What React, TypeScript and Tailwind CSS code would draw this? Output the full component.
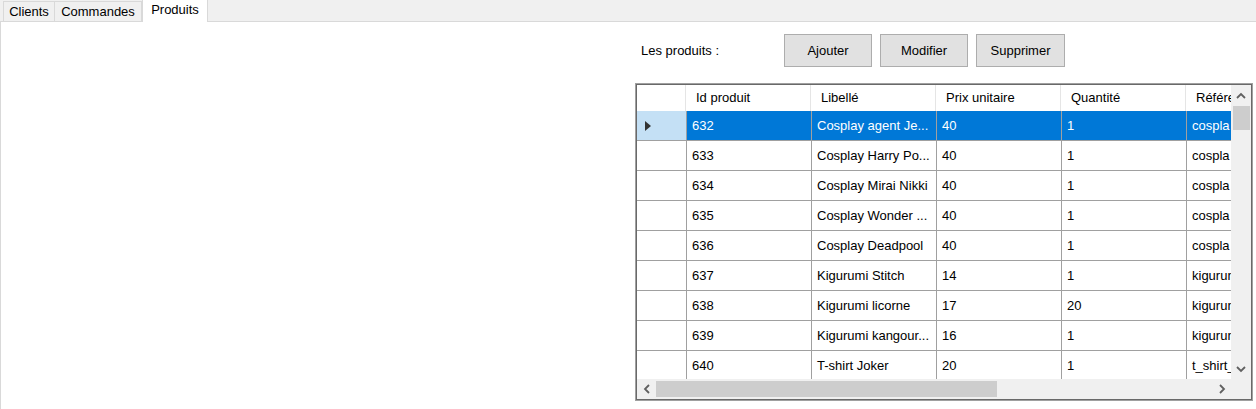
import React from "react";

type Product = {
  id: number;
  label: string;
  price: number;
  qty: number;
  ref: string;
};

const products: Product[] = [
  { id: 632, label: "Cosplay agent Je...", price: 40, qty: 1, ref: "cospla" },
  { id: 633, label: "Cosplay Harry Po...", price: 40, qty: 1, ref: "cospla" },
  { id: 634, label: "Cosplay Mirai Nikki", price: 40, qty: 1, ref: "cospla" },
  { id: 635, label: "Cosplay Wonder ...", price: 40, qty: 1, ref: "cospla" },
  { id: 636, label: "Cosplay Deadpool", price: 40, qty: 1, ref: "cospla" },
  { id: 637, label: "Kigurumi Stitch", price: 14, qty: 1, ref: "kigurun" },
  { id: 638, label: "Kigurumi licorne", price: 17, qty: 20, ref: "kigurun" },
  { id: 639, label: "Kigurumi kangour...", price: 16, qty: 1, ref: "kigurun" },
  { id: 640, label: "T-shirt Joker", price: 20, qty: 1, ref: "t_shirt_" },
];

const font = "font-['Liberation_Sans',Arial,sans-serif] text-[13px]";

function Chevron({ dir }: { dir: "up" | "down" | "left" | "right" }) {
  const d = {
    up: "M1 6 L5 2 L9 6",
    down: "M1 2 L5 6 L9 2",
    left: "M6 1 L2 5 L6 9",
    right: "M2 1 L6 5 L2 9",
  }[dir];
  const vert = dir === "up" || dir === "down";
  return (
    <svg width={vert ? 10 : 8} height={vert ? 8 : 10} viewBox={vert ? "0 0 10 8" : "0 0 8 10"}>
      <path d={d} fill="none" stroke="#606060" strokeWidth="1.8" />
    </svg>
  );
}

export default function App() {
  return (
    <div className={`w-[1256px] h-[409px] bg-white text-black ${font} flex flex-col overflow-hidden`}>
      {/* Tab strip */}
      <div className="h-[22px] bg-[#f0f0f0] flex items-end pl-[3px] border-b border-[#d9d9d9] shrink-0">
        <div className="w-[52px] h-[20px] border border-b-0 border-[#d9d9d9] flex items-center justify-center leading-none">
          Clients
        </div>
        <div className="w-[87px] h-[20px] border border-b-0 border-l-0 border-[#d9d9d9] flex items-center justify-center leading-none">
          Commandes
        </div>
        <div className="w-[66px] h-[23px] -mb-px bg-white border border-b-0 border-[#d9d9d9] flex items-start pt-[3px] justify-center leading-none">
          Produits
        </div>
      </div>

      {/* Tab page */}
      <div className="flex-1 border-l border-[#d9d9d9]">
        <div className="ml-[634px] w-[618px]">
          {/* Toolbar */}
          <div className="flex items-center pt-[12px]">
            <div className="w-[149px] pl-[6px]">Les produits :</div>
            <div className="flex gap-[8px]">
              {["Ajouter", "Modifier", "Supprimer"].map((b) => (
                <div
                  key={b}
                  className="w-[88px] last:w-[89px] h-[33px] bg-[#e1e1e1] border border-[#adadad] flex items-center justify-center"
                >
                  {b}
                </div>
              ))}
            </div>
          </div>

          {/* DataGridView */}
          <div className="mt-[16px] h-[318px] border border-[#a0a0a0]">
            <div className="h-full border border-[#696969] flex flex-col bg-[#f0f0f0]">
              <div className="flex h-[294px]">
                <div className="flex-1 overflow-hidden bg-white">
                  {/* Header */}
                  <div className="flex h-[26px] w-[700px]">
                    <div className="w-[49px] border-r border-[#e5e5e5]" />
                    {["Id produit", "Libellé", "Prix unitaire", "Quantité", "Référence"].map((h) => (
                      <div
                        key={h}
                        className="w-[125px] shrink-0 border-r border-[#e5e5e5] pl-[10px] flex items-center whitespace-nowrap"
                      >
                        {h}
                      </div>
                    ))}
                  </div>
                  {/* Rows */}
                  {products.map((p, i) => {
                    const sel = i === 0;
                    const cell = `w-[125px] shrink-0 border-r border-b border-[#a0a0a0] pl-[5px] flex items-center whitespace-nowrap overflow-hidden ${
                      sel ? "bg-[#0078d7] text-white" : ""
                    }`;
                    return (
                      <div key={p.id} className="flex h-[30px] w-[700px]">
                        <div
                          className={`w-[50px] shrink-0 border-r border-b border-[#a0a0a0] flex items-center pl-[8px] ${
                            sel ? "bg-[#c4e0f5]" : "bg-white"
                          }`}
                        >
                          {sel && (
                            <svg width="6" height="10" viewBox="0 0 6 10">
                              <path d="M0 0 L6 5 L0 10 Z" fill="#333" />
                            </svg>
                          )}
                        </div>
                        <div className={cell}>{p.id}</div>
                        <div className={cell}>{p.label}</div>
                        <div className={cell}>{p.price}</div>
                        <div className={cell}>{p.qty}</div>
                        <div className={cell}>{p.ref}</div>
                      </div>
                    );
                  })}
                </div>
                {/* Vertical scrollbar */}
                <div className="w-[20px] bg-[#f0f0f0] flex flex-col items-center">
                  <div className="h-[21px] flex items-center justify-center">
                    <Chevron dir="up" />
                  </div>
                  <div className="w-[17px] h-[24px] bg-[#cdcdcd]" />
                  <div className="flex-1" />
                  <div className="h-[21px] flex items-center justify-center">
                    <Chevron dir="down" />
                  </div>
                </div>
              </div>
              {/* Horizontal scrollbar */}
              <div className="flex h-[20px]">
                <div className="flex-1 flex items-center">
                  <div className="w-[19px] flex items-center justify-center">
                    <Chevron dir="left" />
                  </div>
                  <div className="w-[341px] h-[16px] bg-[#cdcdcd]" />
                  <div className="flex-1" />
                  <div className="w-[19px] flex items-center justify-center">
                    <Chevron dir="right" />
                  </div>
                </div>
                <div className="w-[20px]" />
              </div>
            </div>
          </div>
        </div>
      </div>
    </div>
  );
}
